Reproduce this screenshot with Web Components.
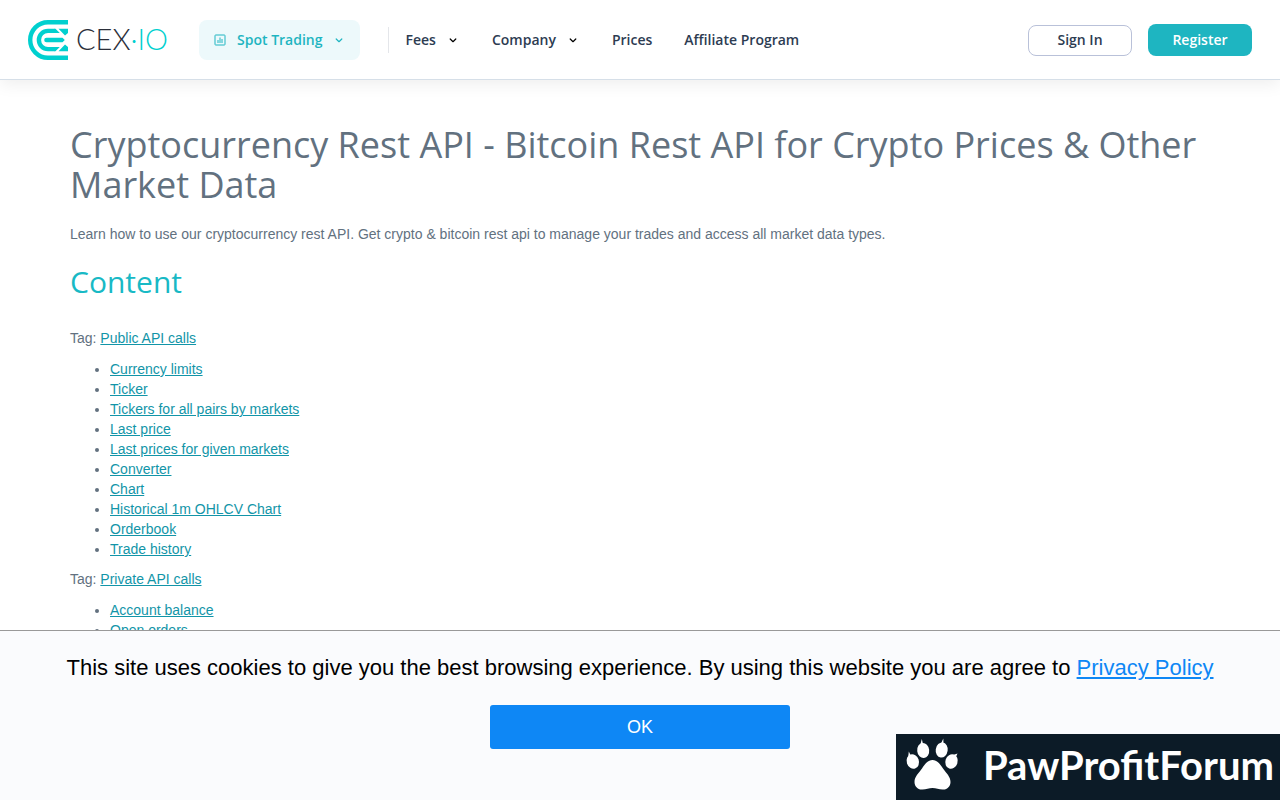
<!DOCTYPE html>
<html lang="en">
<head>
<meta charset="utf-8">
<title>Cryptocurrency Rest API - CEX.IO</title>
<style>
body { margin: 0; background: #fff; color: #62717f; font: 14px/20px "Liberation Sans", Arial, sans-serif; }
</style>
</head>
<body>
<site-header>
  <product-switch slot="product">Spot Trading</product-switch>
  <nav-item href="#fees" menu>Fees</nav-item>
  <nav-item href="#company" menu>Company</nav-item>
  <nav-item href="#prices">Prices</nav-item>
  <nav-item href="#affiliate">Affiliate Program</nav-item>
  <action-button slot="actions" kind="outline">Sign In</action-button>
  <action-button slot="actions" kind="solid">Register</action-button>
</site-header>
<api-docs></api-docs>
<cookie-notice></cookie-notice>
<forum-badge></forum-badge>
<script>
class Base extends HTMLElement {
  constructor() {
    super();
    this.attachShadow({ mode: "open" });
  }
  render(html) {
    const t = document.createElement("template");
    t.innerHTML = html;
    this.shadowRoot.replaceChildren(t.content.cloneNode(true));
  }
}
const chevron = '<svg class="chev" width="8" height="8" viewBox="0 0 8 8" aria-hidden="true"><path d="M1.2 3 4 5.700 6.800 3" fill="none" stroke="currentColor" stroke-width="1.2" stroke-linecap="round" stroke-linejoin="round"/></svg>';

customElements.define("brand-logo", class extends Base {
  connectedCallback() {
    this.render(`<style>
      :host { display: block; }
      a { display: flex; align-items: center; gap: 8px; text-decoration: none; color: #2b2f3a; font: 300 29px/36px Lato, sans-serif; }
      svg { display: block; }
      span { display: block; }
      .name { padding-bottom: 2px; }
      .io { display: inline; color: #00d0cf; }
    </style>
    <a href="#home" aria-label="CEX.IO">
      <svg width="40" height="40" viewBox="0 0 40 40" fill="none" stroke="#00d0cf" stroke-width="4.4">
        <path d="M40 2.2H20a17.8 17.8 0 0 0 0 35.6H40"/>
        <path d="M26.500 10.900H20a9.100 9.100 0 0 0 0 18.200h6.500"/>
        <path d="M26 8.700h1.500l4.300 4.400H26zM26 31.300h1.500l4.300-4.400H26z" fill="#00d0cf" stroke="none"/>
        <path d="M18.500 17.700H34.500L36.800 20 34.500 22.300H18.500a2.300 2.300 0 0 1 0-4.600z" fill="#00d0cf" stroke="none"/>
        <path d="M30.500 8.700H40v4.400l-3 2.400zM30.500 31.300H40v-4.400l-3-2.400z" fill="#00d0cf" stroke="none"/>
      </svg>
      <span class="name">CEX<span class="io">·IO</span></span>
    </a>`);
  }
});

customElements.define("product-switch", class extends Base {
  connectedCallback() {
    this.render(`<style>
      :host { display: block; }
      button { display: flex; align-items: center; height: 40px; padding: 0 16px; border: 0; border-radius: 8px; background: #edf9fb; color: #1eb5c1; font: 600 14px/20px "Open Sans", sans-serif; }
      .ico { margin-right: 12px; }
      .chev { margin: 0 1px 0 13px; }
    </style>
    <button type="button">
      <svg class="ico" width="10" height="10" viewBox="0 0 10 10" fill="none" stroke="currentColor" overflow="visible" aria-hidden="true"><rect x="0" y="0" width="10" height="10" rx=".6"/><path d="M3 8V5M5 8V2.500M7 8V4"/></svg>
      <slot></slot>${chevron}
    </button>`);
  }
});

customElements.define("nav-item", class extends Base {
  connectedCallback() {
    this.render(`<style>
      :host { display: block; }
      a { display: flex; align-items: center; color: #2d3c52; text-decoration: none; white-space: nowrap; font: 600 14px/20px "Open Sans", sans-serif; }
      .chev { margin: 0 7px 0 13px; color: #000; }
    </style>
    <a href="${this.getAttribute("href")}"><slot></slot>${this.hasAttribute("menu") ? chevron : ""}</a>`);
  }
});

customElements.define("action-button", class extends Base {
  connectedCallback() {
    this.render(`<style>
      :host { display: block; }
      button { display: block; width: 104px; padding: 0; border-radius: 8px; font: 600 14px/20px "Open Sans", sans-serif; text-align: center; }
      .outline { height: 31px; border: 1px solid #b9c1d9; background: #fff; color: #2d3c52; }
      .solid { height: 32px; border: 0; background: #1eb5c1; color: #fff; }
    </style>
    <button type="button" class="${this.getAttribute("kind")}"><slot></slot></button>`);
  }
});

customElements.define("site-header", class extends Base {
  connectedCallback() {
    this.render(`<style>
      :host { display: block; }
      header { display: flex; align-items: center; box-sizing: border-box; height: 80px; padding: 0 28px; border-bottom: 1px solid #d6dfe8; background: #fff; box-shadow: 0 4px 16px rgba(0,0,0,.07); }
      brand-logo { width: 171px; }
      nav { display: flex; align-items: center; gap: 32px; margin-left: 28px; height: 26px; border-left: 1px solid #e4e6ea; padding-left: 16px; }
      ::slotted(nav-item[menu]) { margin-right: -4px; }
      .actions { display: flex; align-items: flex-end; gap: 16px; margin-left: auto; }
    </style>
    <header>
      <brand-logo></brand-logo>
      <slot name="product"></slot>
      <nav><slot></slot></nav>
      <div class="actions"><slot name="actions"></slot></div>
    </header>`);
  }
});

customElements.define("tag-section", class extends Base {
  connectedCallback() {
    const items = this.getAttribute("items").split("|");
    this.render(`<style>
      :host { display: block; }
      p { margin: 0 0 11px; }
      ul { margin: 0 0 10px; padding-left: 40px; }
      a { color: #1295a8; text-decoration: underline; }
    </style>
    <p>Tag: <a href="#tag"><slot></slot></a></p>
    <ul>${items.map(i => `<li><a href="#${i.toLowerCase().replace(/ /g, "-")}">${i}</a></li>`).join("")}</ul>`);
  }
});

customElements.define("api-docs", class extends Base {
  connectedCallback() {
    this.render(`<style>
      :host { display: block; }
      main { max-width: 1140px; margin: 0 auto; padding: 45px 0 180px; }
      h1, h2 { font-family: "Open Sans", sans-serif; font-weight: 400; }
      h1 { margin: 0 0 19px; font-size: 36px; line-height: 40px; }
      p { margin: 0; }
      h2 { margin: 20px 0 28px; font-size: 30px; line-height: 36px; color: #18b9c5; }
    </style>
    <main>
      <h1>Cryptocurrency Rest API - Bitcoin Rest API for Crypto Prices &amp; Other Market Data</h1>
      <p>Learn how to use our cryptocurrency rest API. Get crypto &amp; bitcoin rest api to manage your trades and access all market data types.</p>
      <h2>Content</h2>
      <tag-section items="Currency limits|Ticker|Tickers for all pairs by markets|Last price|Last prices for given markets|Converter|Chart|Historical 1m OHLCV Chart|Orderbook|Trade history">Public API calls</tag-section>
      <tag-section items="Account balance|Open orders">Private API calls</tag-section>
    </main>`);
  }
});

customElements.define("cookie-notice", class extends Base {
  connectedCallback() {
    this.render(`<style>
      :host { display: block; position: fixed; left: 0; right: 0; bottom: 0; }
      section { display: flex; flex-direction: column; align-items: center; gap: 22px; padding: 22px 20px 51px; border-top: 1px solid #999; background: #fafbfd; }
      p { margin: 0; color: #000; font-size: 22px; line-height: 30px; text-align: center; }
      a { color: #0e87f5; text-decoration: underline; }
      button { width: 300px; height: 44px; padding: 0; border: 0; border-radius: 3px; background: #0e87f5; color: #fff; font: 18px/24px "Liberation Sans", Arial, sans-serif; }
    </style>
    <section>
      <p>This site uses cookies to give you the best browsing experience. By using this website you are agree to <a href="#privacy">Privacy Policy</a></p>
      <button type="button">OK</button>
    </section>`);
  }
});

customElements.define("forum-badge", class extends Base {
  connectedCallback() {
    this.render(`<style>
      :host { display: block; position: fixed; right: 0; bottom: 0; }
      div { display: flex; align-items: center; box-sizing: border-box; width: 384px; height: 66px; padding: 0 6px 2px 10px; justify-content: space-between; background: #0c1b27; color: #fff; font: 700 40px/60px Lato, sans-serif; }
      span { padding-bottom: 2px; }
    </style>
    <div>
      <svg width="52" height="54" viewBox="0 0 52 54" fill="#fff" overflow="visible" aria-hidden="true">
        <path d="M26.500 21C31 21 34 25 37 29.500C40.500 34.500 44.500 37.500 44.500 43C44.500 47.500 41 51 36.500 50.500C33 50.200 30 49 26.500 49C23 49 20 50.200 16.500 50.500C12 51 8.500 47.500 8.500 43C8.500 37.500 12.500 34.500 16 29.500C19 25 22 21 26.500 21Z"/>
        <ellipse cx="6.800" cy="22.500" rx="6.100" ry="7.400" transform="rotate(-18 6.800 22.500)"/>
        <ellipse cx="17.200" cy="11.500" rx="6" ry="7.600" transform="rotate(-6 17.200 11.500)"/>
        <ellipse cx="35.700" cy="11" rx="6" ry="7.600" transform="rotate(8 35.700 11)"/>
        <ellipse cx="45.500" cy="22.500" rx="6.100" ry="7.400" transform="rotate(18 45.500 22.500)"/>
        <path d="M2.200 18 2.800 12.500 4.500 16zM14.500 5 15.800 0 17 5zM35 4.500 37.300-.5 37.500 5zM47 16 51.500 14.500 49.500 19z"/>
      </svg>
      <span>PawProfitForum</span>
    </div>`);
  }
});
</script>
</body>
</html>
